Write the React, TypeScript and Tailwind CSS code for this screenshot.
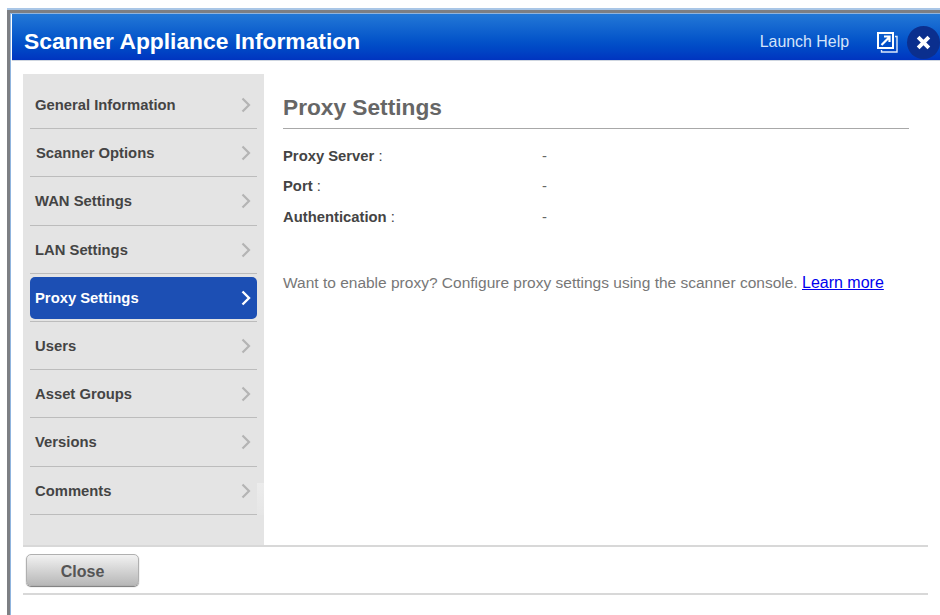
import React from "react";

const menuItems = [
  "General Information",
  "Scanner Options",
  "WAN Settings",
  "LAN Settings",
  "Proxy Settings",
  "Users",
  "Asset Groups",
  "Versions",
  "Comments",
];

const Chevron = ({ active }: { active: boolean }) => (
  <svg width="10" height="16" viewBox="0 0 10 16" className="shrink-0">
    <path
      d="M1.5 1.5 L8 8 L1.5 14.5"
      fill="none"
      stroke={active ? "#ffffff" : "#b4b4b4"}
      strokeWidth={active ? 2.4 : 2.2}
    />
  </svg>
);

const PopoutIcon = () => (
  <svg width="21" height="21" viewBox="0 0 21 21" fill="none" stroke="#ffffff" strokeWidth="2" className="block">
    <path d="M1 1 H16 V16 H1 Z" />
    <path d="M18 4.5 H20 V20 H4.5 V18" strokeWidth="1.4" stroke="#dbe7fa" />
    <path d="M4.5 13 L12 5.5 M7 4.5 H12.5 V10" strokeWidth="2.2" />
  </svg>
);

const MenuRow = ({ label, active }: { label: string; active: boolean }) => (
  <div className="relative h-[48.2px] border-b border-[#bcbcbc] pb-[2px] pt-[3px]">
    <div
      className={`flex h-full items-center justify-between rounded-[5px] pl-[5px] pr-[6px] ${
        active ? "bg-[#1c4fb4] text-white" : "text-[#444444]"
      }`}
    >
      <span className={`text-[14.8px] font-bold ${label === "Scanner Options" ? "ml-px" : ""}`}>{label}</span>
      <Chevron active={active} />
    </div>
    {/* faint highlight at the end of the last row */}
    {label === "Comments" && (
      <div className="absolute bottom-[-1px] left-full h-[32px] w-[7px] bg-gradient-to-b from-[#ececec] to-[#e6e6e6]" />
    )}
  </div>
);

const InfoRow = ({ label }: { label: string }) => (
  <div className="flex h-[30.4px] items-center text-[14.8px] text-[#444444]">
    <div className="w-[259px]">
      <span className="font-bold">{label}</span> :
    </div>
    <div className="text-[#666666]">-</div>
  </div>
);

export default function App() {
  return (
    <div className="h-[615px] w-[940px] overflow-hidden bg-white pl-[7px] pt-[8px] font-['Liberation_Sans',Arial,sans-serif]">
      <div className="h-[607px] border-t-2 border-t-[#a9c6e6]">
        <div className="h-full border-l-[3px] border-t-[3px] border-[#7d7f83]">
          <div className="h-full border-l border-t border-[#8fb4de] pl-px">
            <header className="flex h-[47px] items-center justify-between border-b border-b-[#cfd6e0] bg-gradient-to-b from-[#2378d6] to-[#0034c0] pl-[12px] pt-[10px]">
              <h1 className="mb-[2px] text-[22.8px] font-bold text-white">Scanner Appliance Information</h1>
              <div className="flex items-center">
                <span className="text-[15.9px] text-[#d5e4fa]">Launch Help</span>
                <span className="ml-[28px]"><PopoutIcon /></span>
                <span className="ml-[9px] flex h-[33px] w-[33px] items-center justify-center rounded-full bg-[#0b2f8e] pr-px">
                  <svg width="15" height="15" viewBox="0 0 14 14" stroke="#ffffff" strokeWidth="3.6">
                    <path d="M2 2 L12 12 M12 2 L2 12" />
                  </svg>
                </span>
              </div>
            </header>

            <div className="w-[916px] pl-[11px]">
              <div className="flex h-[486px] border-b-2 border-[#d8d8d8] pt-[13px]">
                <nav className="w-[241px] bg-[#e4e4e4] px-[7px] pt-[7px]">
                  {menuItems.map((item) => (
                    <MenuRow key={item} label={item} active={item === "Proxy Settings"} />
                  ))}
                </nav>
                <main className="flex-1 pl-[19px] pr-[19px]">
                  <h2 className="h-[54.5px] border-b border-[#a8a8a8] pt-[18px] text-[22.7px] font-bold leading-[30px] text-[#666666]">
                    Proxy Settings
                  </h2>
                  <div className="pt-[12.5px]">
                    <InfoRow label="Proxy Server" />
                    <InfoRow label="Port" />
                    <InfoRow label="Authentication" />
                  </div>
                  <p className="mt-[39px] whitespace-nowrap text-[15.5px] text-[#777777]">
                    Want to enable proxy? Configure proxy settings using the scanner console.{" "}
                    <a className="text-[16px] text-[#0000ee] underline">Learn more</a>
                  </p>
                </main>
              </div>

              <div className="h-[48px] border-b-2 border-[#d8d8d8] pl-[3px] pt-[7px]">
                <button className="h-[32px] w-[113px] rounded-[5px] border border-[#b0b0b0] bg-gradient-to-b from-[#f2f2f2] to-[#b8b8b8] pt-[4px] text-[16px] font-bold text-[#555555] shadow-[0_1px_1px_#777777]">
                  Close
                </button>
              </div>
            </div>
          </div>
        </div>
      </div>
    </div>
  );
}
